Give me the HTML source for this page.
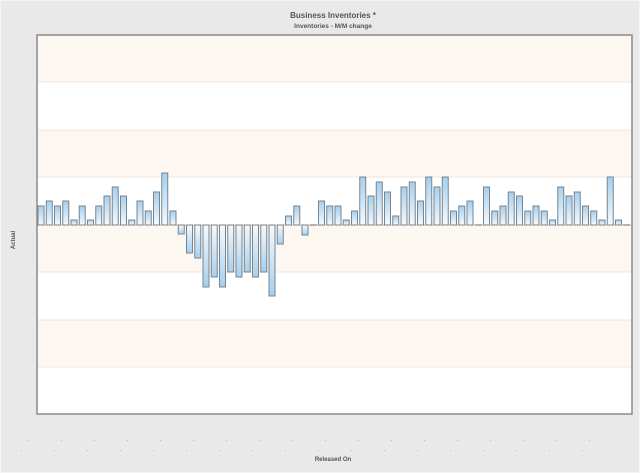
<!DOCTYPE html>
<html><head><meta charset="utf-8"><style>
html,body{margin:0;padding:0;background:#e9e9e9;}
svg{display:block;font-family:"Liberation Sans",sans-serif;}
</style></head><body>
<svg width="640" height="473" viewBox="0 0 640 473" xmlns="http://www.w3.org/2000/svg">
<defs>
<linearGradient id="gp" x1="0" y1="0" x2="0" y2="1"><stop offset="0" stop-color="#a6cfee"/><stop offset="1" stop-color="#f5f9fd"/></linearGradient>
<linearGradient id="gn" x1="0" y1="0" x2="0" y2="1"><stop offset="0" stop-color="#f5f9fd"/><stop offset="1" stop-color="#a6cfee"/></linearGradient>
</defs>
<rect x="0" y="0" width="640" height="473" fill="#e9e9e9"/>
<rect x="0.5" y="0.5" width="639" height="472" fill="none" stroke="#f4f4f4"/>
<text x="333" y="18" font-size="8" font-weight="bold" fill="#555" text-anchor="middle">Business Inventories *</text>
<text x="333" y="28" font-size="6.5" font-weight="bold" fill="#555" text-anchor="middle">Inventories - M/M change</text>
<text transform="translate(15,240) rotate(-90)" font-size="6" font-weight="bold" fill="#555" text-anchor="middle">Actual</text>
<text x="333" y="461" font-size="6" font-weight="bold" fill="#555" text-anchor="middle">Released On</text>
<g fill="#fdf7f1">
<rect x="37" y="35" width="595" height="47"/><rect x="37" y="82" width="595" height="48" fill="#fff"/>
<rect x="37" y="130" width="595" height="47"/><rect x="37" y="177" width="595" height="48" fill="#fff"/>
<rect x="37" y="225" width="595" height="47"/><rect x="37" y="272" width="595" height="48" fill="#fff"/>
<rect x="37" y="320" width="595" height="47"/><rect x="37" y="367" width="595" height="47" fill="#fff"/>
</g>
<g stroke="#f3e6da" stroke-width="1">
<line x1="37" y1="82" x2="632" y2="82"/><line x1="37" y1="130" x2="632" y2="130"/><line x1="37" y1="177" x2="632" y2="177"/>
<line x1="37" y1="272" x2="632" y2="272"/><line x1="37" y1="320" x2="632" y2="320"/><line x1="37" y1="367" x2="632" y2="367"/>
</g>
<line x1="37" y1="225" x2="632" y2="225" stroke="#e7b59a" stroke-width="1"/>
<g stroke="#77858f" stroke-width="1" fill="url(#gp)">
<rect x="38" y="206" width="6" height="19"/><rect x="46.25" y="201" width="6" height="24"/><rect x="54.5" y="206" width="6" height="19"/><rect x="62.75" y="201" width="6" height="24"/><rect x="71" y="220" width="6" height="5"/><rect x="79.25" y="206" width="6" height="19"/><rect x="87.5" y="220" width="6" height="5"/><rect x="95.75" y="206" width="6" height="19"/><rect x="104" y="196" width="6" height="29"/><rect x="112.25" y="187" width="6" height="38"/><rect x="120.5" y="196" width="6" height="29"/><rect x="128.75" y="220" width="6" height="5"/><rect x="137" y="201" width="6" height="24"/><rect x="145.25" y="211" width="6" height="14"/><rect x="153.5" y="192" width="6" height="33"/><rect x="161.75" y="173" width="6" height="52"/><rect x="170" y="211" width="6" height="14"/>
<rect x="285.5" y="216" width="6" height="9"/><rect x="293.75" y="206" width="6" height="19"/>
<rect x="318.5" y="201" width="6" height="24"/><rect x="326.75" y="206" width="6" height="19"/><rect x="335" y="206" width="6" height="19"/><rect x="343.25" y="220" width="6" height="5"/><rect x="351.5" y="211" width="6" height="14"/><rect x="359.75" y="177" width="6" height="48"/><rect x="368" y="196" width="6" height="29"/><rect x="376.25" y="182" width="6" height="43"/><rect x="384.5" y="192" width="6" height="33"/><rect x="392.75" y="216" width="6" height="9"/><rect x="401" y="187" width="6" height="38"/><rect x="409.25" y="182" width="6" height="43"/><rect x="417.5" y="201" width="6" height="24"/><rect x="425.75" y="177" width="6" height="48"/><rect x="434" y="187" width="6" height="38"/><rect x="442.25" y="177" width="6" height="48"/><rect x="450.5" y="211" width="6" height="14"/><rect x="458.75" y="206" width="6" height="19"/><rect x="467" y="201" width="6" height="24"/>
<rect x="483.5" y="187" width="6" height="38"/><rect x="491.75" y="211" width="6" height="14"/><rect x="500" y="206" width="6" height="19"/><rect x="508.25" y="192" width="6" height="33"/><rect x="516.5" y="196" width="6" height="29"/><rect x="524.75" y="211" width="6" height="14"/><rect x="533" y="206" width="6" height="19"/><rect x="541.25" y="211" width="6" height="14"/><rect x="549.5" y="220" width="6" height="5"/><rect x="557.75" y="187" width="6" height="38"/><rect x="566" y="196" width="6" height="29"/><rect x="574.25" y="192" width="6" height="33"/><rect x="582.5" y="206" width="6" height="19"/><rect x="590.75" y="211" width="6" height="14"/><rect x="599" y="220" width="6" height="5"/><rect x="607.25" y="177" width="6" height="48"/><rect x="615.5" y="220" width="6" height="5"/>
</g>
<g stroke="#77858f" stroke-width="1" fill="url(#gn)">
<rect x="178.25" y="225" width="6" height="9"/><rect x="186.5" y="225" width="6" height="28"/><rect x="194.75" y="225" width="6" height="33"/><rect x="203" y="225" width="6" height="62"/><rect x="211.25" y="225" width="6" height="52"/><rect x="219.5" y="225" width="6" height="62"/><rect x="227.75" y="225" width="6" height="47"/><rect x="236" y="225" width="6" height="52"/><rect x="244.25" y="225" width="6" height="47"/><rect x="252.5" y="225" width="6" height="52"/><rect x="260.75" y="225" width="6" height="47"/><rect x="269" y="225" width="6" height="71"/><rect x="277.25" y="225" width="6" height="19"/>
<rect x="302" y="225" width="6" height="10"/>
</g>
<g stroke="#6a6a6a" stroke-width="1">
<line x1="310" y1="225" x2="317" y2="225"/><line x1="475" y1="225" x2="482" y2="225"/><line x1="623" y1="225" x2="630" y2="225"/>
</g>
<rect x="37" y="35" width="595" height="379" fill="none" stroke="#8a8a8a" stroke-width="1.5"/>
<g fill="#bbb">
<rect x="28" y="440" width="1" height="1"/><rect x="61" y="440" width="1" height="1"/><rect x="94" y="440" width="1" height="1"/><rect x="127" y="440" width="1" height="1"/><rect x="160" y="440" width="1" height="1"/><rect x="193" y="440" width="1" height="1"/><rect x="226" y="440" width="1" height="1"/><rect x="259" y="440" width="1" height="1"/><rect x="292" y="440" width="1" height="1"/><rect x="325" y="440" width="1" height="1"/><rect x="358" y="440" width="1" height="1"/><rect x="391" y="440" width="1" height="1"/><rect x="424" y="440" width="1" height="1"/><rect x="457" y="440" width="1" height="1"/><rect x="490" y="440" width="1" height="1"/><rect x="523" y="440" width="1" height="1"/><rect x="556" y="440" width="1" height="1"/><rect x="589" y="440" width="1" height="1"/>
<rect x="21" y="450" width="1" height="1"/><rect x="54" y="450" width="1" height="1"/><rect x="87" y="450" width="1" height="1"/><rect x="120" y="450" width="1" height="1"/><rect x="153" y="450" width="1" height="1"/><rect x="186" y="450" width="1" height="1"/><rect x="219" y="450" width="1" height="1"/><rect x="252" y="450" width="1" height="1"/><rect x="285" y="450" width="1" height="1"/><rect x="318" y="450" width="1" height="1"/><rect x="351" y="450" width="1" height="1"/><rect x="384" y="450" width="1" height="1"/><rect x="417" y="450" width="1" height="1"/><rect x="450" y="450" width="1" height="1"/><rect x="483" y="450" width="1" height="1"/><rect x="516" y="450" width="1" height="1"/><rect x="549" y="450" width="1" height="1"/><rect x="582" y="450" width="1" height="1"/>
</g>
</svg>
</body></html>
